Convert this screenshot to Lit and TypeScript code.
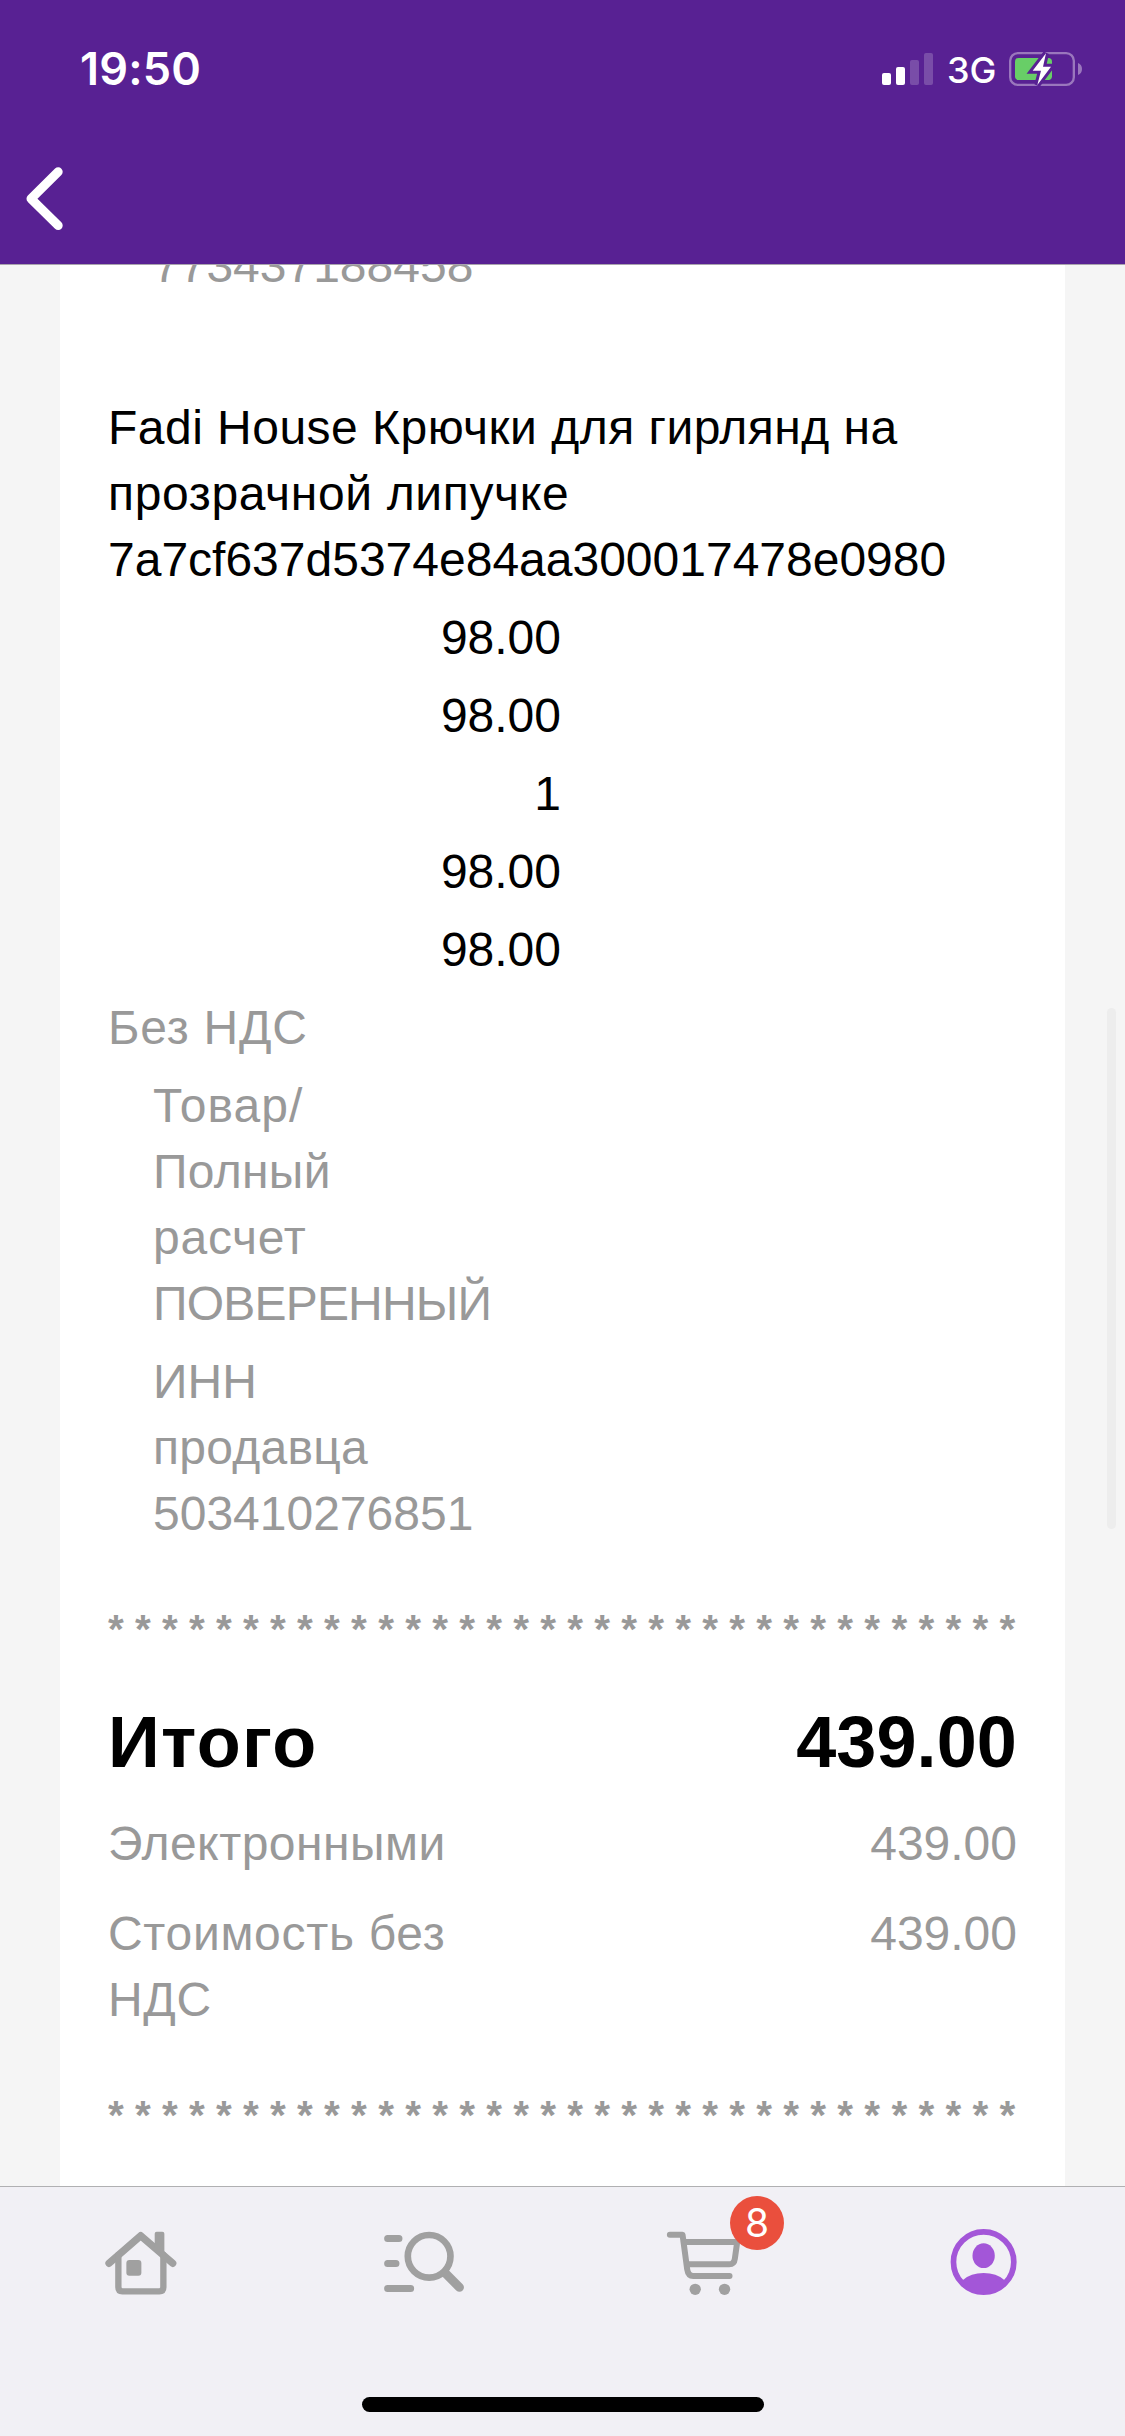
import { LitElement, html, css, svg } from "lit";
import { customElement } from "lit/decorators.js";

const STARS = Array(34).fill("*").join(" ");

@customElement("status-bar")
class StatusBar extends LitElement {
  static styles = css`
    :host { display: flex; justify-content: space-between; height: 138px; box-sizing: border-box;
      padding: 0 43px 0 80px; align-items: center; color: #fff; font-family: Inter, sans-serif; }
    .time { font-size: 45px; font-weight: 600; line-height: 54px; letter-spacing: 0.2px; }
    .right { display: flex; align-items: center; }
    .net { font-size: 36px; line-height: 44px; font-weight: 500; margin: 2px 14px 0 14px; width: 48px; white-space: nowrap; }
    svg { display: block; }
  `;
  render() {
    return html`
      <div class="time">19:50</div>
      <div class="right">
        <svg width="51" height="32" viewBox="246 99 153 96" fill="#fff">
          <rect x="246" y="159" width="27" height="36" rx="6" />
          <rect x="288" y="141" width="27" height="54" rx="6" />
          <rect x="330" y="120" width="27" height="75" rx="6" opacity=".2" />
          <rect x="372" y="99" width="27" height="96" rx="6" opacity=".2" />
        </svg>
        <div class="net">3G</div>
        <svg width="73" height="34" viewBox="627 96 219 102">
          <rect x="630.5" y="99.500" width="191" height="95" rx="23" fill="none" stroke="#9a77bd" stroke-width="7" />
          <path d="M834 129 Q846 134 846 147 Q846 160 834 165 Z" fill="#9a77bd" />
          <rect x="645" y="114" width="111" height="66" rx="11" fill="#68ce67" />
          <path d="M738 100 L698 152 H723 L712 195 L753 140 H729 Z" fill="#fff" stroke="#582193" stroke-width="18" />
          <path d="M738 100 L698 152 H723 L712 195 L753 140 H729 Z" fill="#fff" />
        </svg>
      </div>
    `;
  }
}

@customElement("receipt-card")
class ReceiptCard extends LitElement {
  static styles = css`
    :host { display: flex; flex-direction: column; box-sizing: border-box; margin: -32px 60px 0; padding: 0 48px;
      background: #fff; color: #000; font: 48px/66px "Liberation Sans", Arial, sans-serif; white-space: nowrap; flex: 1; }
    .muted { color: #999; }
    .indent { padding-left: 45px; }
    .item { display: flex; flex-direction: column; gap: 12px; margin-top: 96px; }
    .values { display: flex; flex-direction: column; gap: 12px; width: 453px; text-align: right; }
    .stars { font-size: 40.5px; font-weight: 700; margin-top: 49px; color: #999; }
    .row { display: flex; justify-content: space-between; }
    .total { font-size: 72px; line-height: 84px; font-weight: 700; margin-top: 38px; }
    .pay { margin-top: 27px; }
    .cost { margin-top: 24px; }
    .l1 { letter-spacing: 0.48px; }
    .l2 { letter-spacing: 0.65px; }
    .vat { letter-spacing: 0.75px; }
    .m1 { letter-spacing: 1.1px; }
    .m2 { letter-spacing: 0.3px; }
    .m3 { letter-spacing: 0.75px; }
    .m4 { letter-spacing: -0.8px; }
    .s2 { letter-spacing: 0.3px; }
    .t1 { letter-spacing: 1.3px; }
    .t2 { letter-spacing: 0.1px; }
    .p1 { letter-spacing: 0.5px; }
    .p2 { letter-spacing: 0.7px; }
  `;
  render() {
    return html`
      <div class="muted indent">773437188458</div>
      <div class="item">
        <div class="name">
          <div class="l1">Fadi House Крючки для гирлянд на</div>
          <div class="l2">прозрачной липучке</div>
          <div>7a7cf637d5374e84aa300017478e0980</div>
        </div>
        <div class="values">
          ${["98.00", "98.00", "1", "98.00", "98.00"].map((v) => html`<div>${v}</div>`)}
        </div>
        <div class="muted vat">Без НДС</div>
        <div class="muted indent">
          <div class="m1">Товар/</div><div class="m2">Полный</div><div class="m3">расчет</div><div class="m4">ПОВЕРЕННЫЙ</div>
        </div>
        <div class="muted indent">
          <div>ИНН</div><div class="s2">продавца</div><div>503410276851</div>
        </div>
      </div>
      <div class="stars">${STARS}</div>
      <div class="row total"><span class="t1">Итого</span><span class="t2">439.00</span></div>
      <div class="row pay muted"><span class="p1">Электронными</span><span>439.00</span></div>
      <div class="row cost muted"><span class="p2">Стоимость без<br />НДС</span><span>439.00</span></div>
      <div class="stars">${STARS}</div>
    `;
  }
}

const houseIcon = svg`
  <g fill="none" stroke="#a0a0a0" stroke-linecap="round" stroke-linejoin="round">
    <path d="M146 250 L241 167 L337 250" stroke-width="22" />
    <path d="M174 225 V322 Q174 334 186 334 H297 Q309 334 309 322 V225" stroke-width="19" />
  </g>
  <path d="M283 161 Q283 155 289 155 H306 Q312 155 312 161 V228 L283 202 Z" fill="#a0a0a0" />
  <rect x="198" y="240" width="45" height="47" rx="9" fill="#a0a0a0" />`;

const searchIcon = svg`
  <g fill="none" stroke="#a0a0a0" stroke-linecap="round" stroke-width="21">
    <path d="M982.5 175.500 H1016.5 M982.5 250.500 H1007.5 M982.5 325.500 H1051.5" />
    <circle cx="1107" cy="229" r="64" stroke-width="20" />
    <path d="M1157 281 L1198 322" stroke-width="27" />
  </g>`;

const cartIcon = svg`
  <g fill="none" stroke="#a0a0a0" stroke-linecap="round" stroke-linejoin="round" stroke-width="18">
    <path d="M90 164 H128 L142 268 Q145 288 160 288 H269" />
    <path d="M132 186 H292 L285 236 Q283 253 268 253 H146" />
  </g>
  <circle cx="166" cy="328" r="17" fill="#a0a0a0" />
  <circle cx="254" cy="328" r="17" fill="#a0a0a0" />`;

const personIcon = svg`
  <circle cx="1032" cy="246" r="90.5" fill="none" stroke="#a356d8" stroke-width="17" />
  <ellipse cx="1032" cy="227" rx="33.500" ry="37" fill="#a356d8" />
  <path d="M970 300 Q993 279 1032 279 Q1071 279 1094 300 L1105 310 Q1075 342 1032 342 Q989 342 959 310 Z" fill="#a356d8" />`;

@customElement("tab-bar")
class TabBar extends LitElement {
  static styles = css`
    :host { display: flex; flex-direction: column; align-items: center; justify-content: space-between; height: 250px; box-sizing: border-box;
      border-top: 1px solid #b0b0b2; background: #f1f0f5; padding: 29px 0 24px; }
    .tabs { display: grid; grid-template-columns: repeat(4, 1fr); width: 100%; justify-items: center; }
    .tab { position: relative; width: 90px; height: 90px; }
    svg { display: block; }
    .badge { position: absolute; left: 72px; top: -20px; width: 54px; height: 54px; border-radius: 50%; background: #ea4f3d;
      color: #fff; font: 39px/54px Inter, sans-serif; text-align: center; }
    .home { width: 402px; height: 15px; border-radius: 8px; background: #000; }
  `;
  render() {
    return html`
      <div class="tabs">
        <div class="tab"><svg width="90" height="90" viewBox="106.9 108 270 270">${houseIcon}</svg></div>
        <div class="tab"><svg width="90" height="90" viewBox="950.6 108 270 270">${searchIcon}</svg></div>
        <div class="tab"><svg width="90" height="90" viewBox="54.4 108 270 270">${cartIcon}</svg><div class="badge">8</div></div>
        <div class="tab"><svg width="90" height="90" viewBox="898.1 108 270 270">${personIcon}</svg></div>
      </div>
      <div class="home"></div>
    `;
  }
}

@customElement("app-root")
class AppRoot extends LitElement {
  static styles = css`
    :host { display: flex; flex-direction: column; width: 1125px; height: 2436px; background: #f5f5f5; overflow: hidden; }
    .header { background: #582193; height: 265px; box-sizing: border-box; border-bottom: 1px solid #a9a3ad; }
    .back { display: block; margin: 27px 0 0 24px; }
    .content { position: relative; flex: 1; min-height: 0; overflow: hidden; display: flex; flex-direction: column; }
    .scroll { position: absolute; right: 9px; top: 743px; width: 9px; height: 521px; border-radius: 5px; background: #ededed; }
  `;
  render() {
    return html`
      <div class="header">
        <status-bar></status-bar>
        <svg class="back" width="42" height="68" viewBox="0 0 42 68">
          <path d="M34.200 6.800 L7 33.700 L34.200 60.500" fill="none" stroke="#fff" stroke-width="9" stroke-linecap="round" stroke-linejoin="round" />
        </svg>
      </div>
      <div class="content">
        <receipt-card></receipt-card>
        <div class="scroll"></div>
      </div>
      <tab-bar></tab-bar>
    `;
  }
}
